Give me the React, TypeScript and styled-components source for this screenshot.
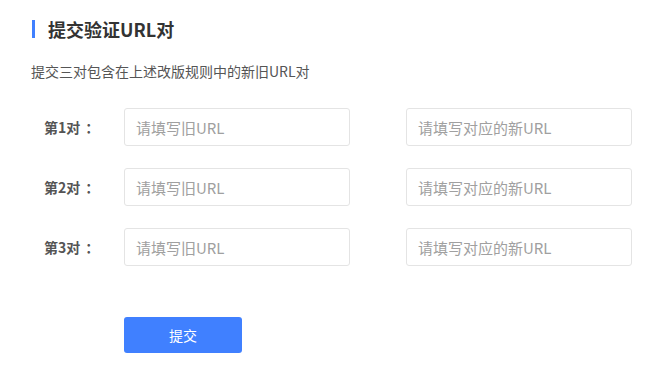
import styled, { createGlobalStyle } from "styled-components";

const GlobalStyle = createGlobalStyle`
  html, body {
    margin: 0;
    padding: 0;
    background: #ffffff;
    font-family: "Noto Sans CJK SC", "Noto Sans", sans-serif;
  }
`;

const Page = styled.div`
  width: 656px;
  height: 367px;
  box-sizing: border-box;
  padding: 19px 0 0 31px;
  display: flex;
  flex-direction: column;
`;

const TitleRow = styled.div`
  display: flex;
  align-items: center;
  gap: 13px;
  height: 20px;
`;

const TitleBar = styled.div`
  width: 3px;
  height: 18px;
  margin-left: 1px;
  background: #4080ff;
`;

const Title = styled.h1`
  margin: 0;
  font-size: 18px;
  font-weight: 700;
  color: #333333;
  line-height: 20px;
`;

const Subtitle = styled.p`
  margin: 23px 0 0 0;
  font-size: 14px;
  line-height: 18px;
  color: #555555;
`;

const Form = styled.div`
  margin-top: 28px;
  display: flex;
  flex-direction: column;
  gap: 22px;
`;

const PairRow = styled.div`
  display: flex;
  align-items: center;
  height: 38px;
`;

const Label = styled.span`
  width: 93px;
  box-sizing: border-box;
  padding-left: 13px;
  font-size: 14px;
  font-weight: 700;
  color: #555555;
  white-space: pre;
`;

const Colon = styled.span`
  margin-left: 5px;
`;

const UrlInput = styled.input`
  width: 226px;
  height: 38px;
  box-sizing: border-box;
  padding: 0 11px;
  border: 1px solid #e4e4e4;
  border-radius: 3px;
  font-family: inherit;
  font-size: 15px;
  color: #333333;
  outline: none;
  &::placeholder {
    color: #a0a0a0;
  }
`;

const Spacer = styled.div`
  width: 56px;
`;

const Footer = styled.div`
  margin-top: 51px;
  padding-left: 93px;
`;

const SubmitButton = styled.button`
  width: 118px;
  height: 36px;
  border: none;
  border-radius: 3px;
  background: #4080ff;
  color: #ffffff;
  font-family: inherit;
  font-size: 14px;
  cursor: pointer;
`;

const pairs = [1, 2, 3];

const App = () => {
  return (
    <>
      <GlobalStyle />
      <Page>
        <TitleRow>
          <TitleBar />
          <Title>提交验证URL对</Title>
        </TitleRow>
        <Subtitle>提交三对包含在上述改版规则中的新旧URL对</Subtitle>
        <Form>
          {pairs.map((n) => (
            <PairRow key={n}>
              <Label>
                第{n}对<Colon>：</Colon>
              </Label>
              <UrlInput placeholder="请填写旧URL" />
              <Spacer />
              <UrlInput placeholder="请填写对应的新URL" />
            </PairRow>
          ))}
        </Form>
        <Footer>
          <SubmitButton>提交</SubmitButton>
        </Footer>
      </Page>
    </>
  );
};

export default App;
